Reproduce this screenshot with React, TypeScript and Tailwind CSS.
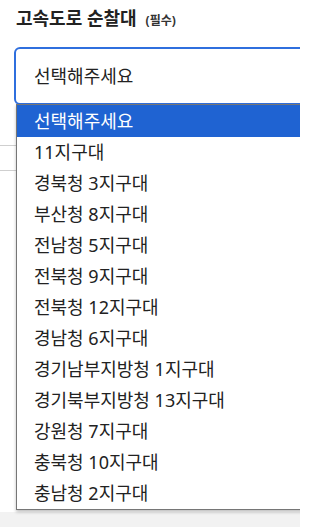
import React from "react";

const options = [
  "선택해주세요",
  "11지구대",
  "경북청 3지구대",
  "부산청 8지구대",
  "전남청 5지구대",
  "전북청 9지구대",
  "전북청 12지구대",
  "경남청 6지구대",
  "경기남부지방청 1지구대",
  "경기북부지방청 13지구대",
  "강원청 7지구대",
  "충북청 10지구대",
  "충남청 2지구대",
];

function App() {
  return (
    <div
      className="relative w-[310px] h-[527px] bg-white overflow-hidden text-[#222]"
      style={{ fontFamily: '"Noto Sans", "Noto Sans CJK KR", sans-serif' }}
    >
      <div className="relative w-[300px] h-full overflow-hidden">
        <div className="flex items-baseline gap-[9px] pl-[16px] pt-[5px] h-[30px]">
          <span className="text-[18px] font-bold leading-[26px]">고속도로 순찰대</span>
          <span className="text-[12px] font-bold text-[#333]">(필수)</span>
        </div>

        <div className="ml-[14px] mt-[17px] w-[300px] h-[58px] border-[2px] border-[#2f6fde] rounded-[6px] flex items-center pl-[18px]">
          <span className="text-[18px]">선택해주세요</span>
        </div>

        {/* content behind the open list */}
        <div className="mt-[40px] w-full">
          <div className="h-[25px] border-t border-[#cfcfcf]" />
          <div className="border-t border-[#cfcfcf]" />
        </div>
        <div className="absolute left-0 bottom-0 w-full h-[15px] bg-[#f2f2f2]" />

        <ul className="absolute left-[16px] top-[104px] w-[300px] bg-white border border-[#767676] shadow-[0_2px_3px_rgba(0,0,0,0.25)]">
          {options.map((o, i) => (
            <li
              key={o}
              className={
                "h-[31px] flex items-center pl-[17px] text-[18px] " +
                (i === 0 ? "bg-[#1f63d2] text-white h-[32px]" : "text-[#222]")
              }
            >
              {o}
            </li>
          ))}
        </ul>
      </div>
    </div>
  );
}

export default App;
